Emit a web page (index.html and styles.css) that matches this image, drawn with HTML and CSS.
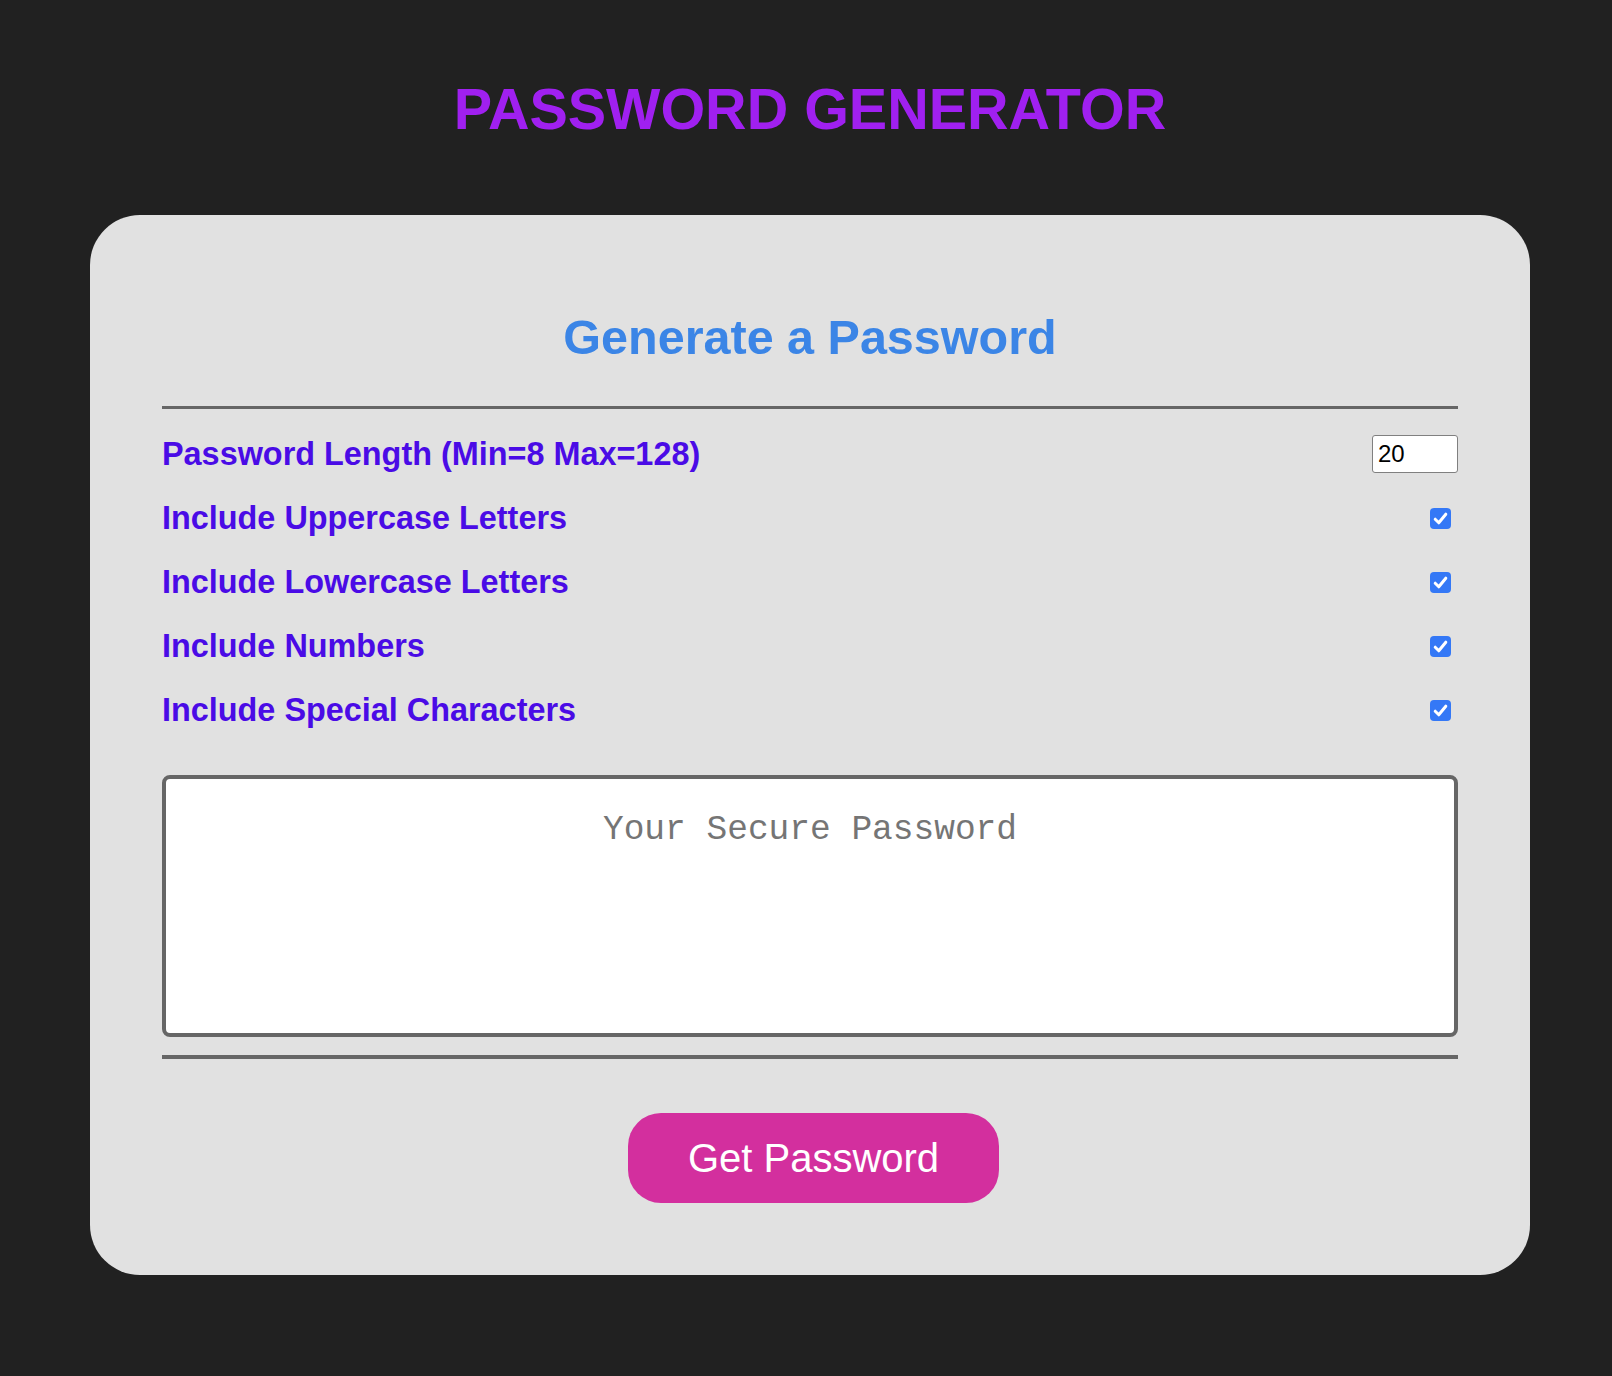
FILE: index.html
```html
<!DOCTYPE html>
<html lang="en">
<head>
<meta charset="utf-8">
<title>Password Generator</title>
<link rel="stylesheet" href="styles.css">
</head>
<body>
<div class="page">
  <h1 class="title">PASSWORD GENERATOR</h1>
  <main class="card">
    <h2 class="card-title">Generate a Password</h2>
    <hr class="rule rule-top">
    <div class="options">
      <div class="row">
        <label class="label" for="len">Password Length (Min=8 Max=128)</label>
        <input class="num" id="len" type="text" value="20">
      </div>
      <div class="row">
        <span class="label">Include Uppercase Letters</span>
        <span class="check"><svg viewBox="0 0 21 21" width="21" height="21"><rect width="21" height="21" rx="4" fill="#3478f6"/><path d="M5.2 11.2 L8.8 14.8 L15.8 6.2" fill="none" stroke="#fff" stroke-width="3" stroke-linecap="round" stroke-linejoin="round"/></svg></span>
      </div>
      <div class="row">
        <span class="label">Include Lowercase Letters</span>
        <span class="check"><svg viewBox="0 0 21 21" width="21" height="21"><rect width="21" height="21" rx="4" fill="#3478f6"/><path d="M5.2 11.2 L8.8 14.8 L15.8 6.2" fill="none" stroke="#fff" stroke-width="3" stroke-linecap="round" stroke-linejoin="round"/></svg></span>
      </div>
      <div class="row">
        <span class="label">Include Numbers</span>
        <span class="check"><svg viewBox="0 0 21 21" width="21" height="21"><rect width="21" height="21" rx="4" fill="#3478f6"/><path d="M5.2 11.2 L8.8 14.8 L15.8 6.2" fill="none" stroke="#fff" stroke-width="3" stroke-linecap="round" stroke-linejoin="round"/></svg></span>
      </div>
      <div class="row">
        <span class="label">Include Special Characters</span>
        <span class="check"><svg viewBox="0 0 21 21" width="21" height="21"><rect width="21" height="21" rx="4" fill="#3478f6"/><path d="M5.2 11.2 L8.8 14.8 L15.8 6.2" fill="none" stroke="#fff" stroke-width="3" stroke-linecap="round" stroke-linejoin="round"/></svg></span>
      </div>
    </div>
    <textarea class="output" placeholder="Your Secure Password" readonly></textarea>
    <hr class="rule rule-bottom">
    <div class="actions">
      <button class="btn" type="button">Get Password</button>
    </div>
  </main>
</div>
</body>
</html>
```
FILE: styles.css
```css
html {
  background: #212121;
}
body {
  margin: 0;
  background: #212121;
  font-family: "Liberation Sans", Arial, Helvetica, sans-serif;
}
.page {
  padding: 77px 82px 0 90px;
}
.title {
  margin: 0;
  text-align: center;
  font-size: 57.5px;
  line-height: 64px;
  font-weight: 700;
  color: #a020f0;
}
.card {
  margin-top: 74px;
  background: #e1e1e1;
  border-radius: 50px;
  padding: 94px 72px 72px 72px;
}
.card-title {
  margin: 0;
  text-align: center;
  font-size: 48.5px;
  line-height: 56px;
  font-weight: 700;
  color: #3b85e6;
}
.rule {
  border: 0;
  background: #666666;
  margin: 0;
}
.rule-top {
  height: 3px;
  margin-top: 41px;
}
.options {
  margin-top: 13px;
  display: flex;
  flex-direction: column;
}
.row {
  height: 64px;
  display: flex;
  align-items: center;
  justify-content: space-between;
}
.label {
  font-size: 32.4px;
  line-height: 37px;
  font-weight: 700;
  color: #4a0be6;
}
.num {
  box-sizing: border-box;
  width: 86px;
  height: 38px;
  border: 1px solid #808080;
  border-radius: 3px;
  background: #fff;
  padding: 0 0 0 5px;
  font-family: "Liberation Sans", Arial, sans-serif;
  font-size: 24px;
  color: #000;
  outline: none;
}
.check {
  display: block;
  width: 21px;
  height: 21px;
  margin-right: 7px;
}
.check svg {
  display: block;
}
.output {
  display: block;
  box-sizing: border-box;
  width: 100%;
  height: 262px;
  margin-top: 33px;
  border: 4px solid #666666;
  border-radius: 8px;
  background: #fff;
  padding: 31px 10px 0 10px;
  resize: none;
  text-align: center;
  font-family: "Liberation Mono", "Courier New", monospace;
  font-size: 34.5px;
  color: #333;
  outline: none;
}
.output::placeholder {
  color: #757575;
}
.rule-bottom {
  height: 4px;
  margin-top: 18px;
}
.actions {
  display: flex;
  justify-content: center;
  padding-left: 7px;
  margin-top: 54px;
}
.btn {
  width: 371px;
  height: 90px;
  border: 0;
  border-radius: 33px;
  background: #d32f9e;
  color: #fff;
  font-family: "Liberation Sans", Arial, sans-serif;
  font-size: 40px;
  font-weight: 400;
  cursor: pointer;
}
```
